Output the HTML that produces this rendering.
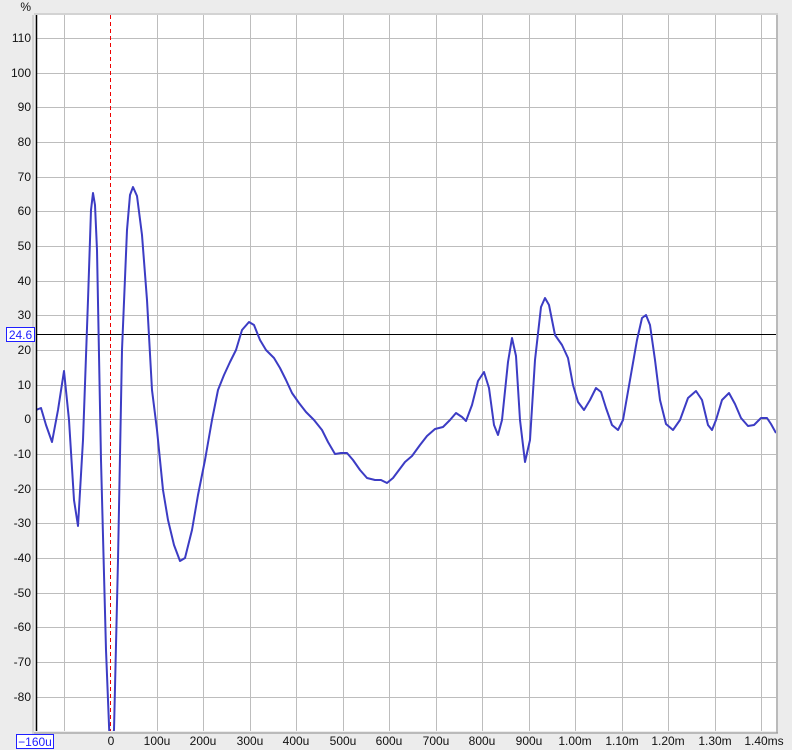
<!DOCTYPE html>
<html><head><meta charset="utf-8"><style>
html,body{margin:0;padding:0;background:#ececec;}
svg{display:block;font-family:"Liberation Sans","DejaVu Sans",sans-serif;}
</style></head><body>
<svg width="792" height="750" viewBox="0 0 792 750" xmlns="http://www.w3.org/2000/svg">
<rect width="792" height="750" fill="#ececec"/>
<rect x="36" y="15" width="740" height="716" fill="#fff"/>
<g stroke="#bdbdbd" stroke-width="1">
<line x1="64.5" y1="15" x2="64.5" y2="731"/>
<line x1="157.5" y1="15" x2="157.5" y2="731"/>
<line x1="203.5" y1="15" x2="203.5" y2="731"/>
<line x1="250.5" y1="15" x2="250.5" y2="731"/>
<line x1="296.5" y1="15" x2="296.5" y2="731"/>
<line x1="343.5" y1="15" x2="343.5" y2="731"/>
<line x1="389.5" y1="15" x2="389.5" y2="731"/>
<line x1="436.5" y1="15" x2="436.5" y2="731"/>
<line x1="482.5" y1="15" x2="482.5" y2="731"/>
<line x1="529.5" y1="15" x2="529.5" y2="731"/>
<line x1="575.5" y1="15" x2="575.5" y2="731"/>
<line x1="622.5" y1="15" x2="622.5" y2="731"/>
<line x1="668.5" y1="15" x2="668.5" y2="731"/>
<line x1="715.5" y1="15" x2="715.5" y2="731"/>
<line x1="761.5" y1="15" x2="761.5" y2="731"/>
<line x1="36" y1="38.5" x2="776" y2="38.5"/>
<line x1="36" y1="73.5" x2="776" y2="73.5"/>
<line x1="36" y1="107.5" x2="776" y2="107.5"/>
<line x1="36" y1="142.5" x2="776" y2="142.5"/>
<line x1="36" y1="177.5" x2="776" y2="177.5"/>
<line x1="36" y1="211.5" x2="776" y2="211.5"/>
<line x1="36" y1="246.5" x2="776" y2="246.5"/>
<line x1="36" y1="281.5" x2="776" y2="281.5"/>
<line x1="36" y1="315.5" x2="776" y2="315.5"/>
<line x1="36" y1="350.5" x2="776" y2="350.5"/>
<line x1="36" y1="385.5" x2="776" y2="385.5"/>
<line x1="36" y1="419.5" x2="776" y2="419.5"/>
<line x1="36" y1="454.5" x2="776" y2="454.5"/>
<line x1="36" y1="489.5" x2="776" y2="489.5"/>
<line x1="36" y1="523.5" x2="776" y2="523.5"/>
<line x1="36" y1="558.5" x2="776" y2="558.5"/>
<line x1="36" y1="593.5" x2="776" y2="593.5"/>
<line x1="36" y1="627.5" x2="776" y2="627.5"/>
<line x1="36" y1="662.5" x2="776" y2="662.5"/>
<line x1="36" y1="697.5" x2="776" y2="697.5"/>
</g>
<line x1="110.5" y1="15" x2="110.5" y2="731" stroke="#e00" stroke-width="1" stroke-dasharray="4,3"/>
<line x1="36" y1="334.5" x2="776" y2="334.5" stroke="#000" stroke-width="1"/>
<svg x="36" y="15" width="740" height="716" viewBox="36 15 740 716" overflow="hidden">
<polyline fill="none" stroke="#3c3cc4" stroke-width="2" stroke-linejoin="round" points="36,410 41,408 46,425 52,442 58,410 64,371 69,420 74,500 78,526 83,440 88,300 91,210 93,193 95,205 97,250 101,460 106,650 110,750 114,730 118,560 122,350 127,230 130,195 133,187 137,196 142,235 147,300 152,390 157,430 163,490 168,520 174,545 180,561 185,558 192,530 198,495 205,460 212,420 218,390 224,375 230,362 236,350 242,330 249,322 254,325 260,340 266,350 274,358 280,368 286,380 292,393 299,403 306,412 314,420 322,430 328,442 335,454 341,453 347,453 353,460 360,470 367,478 375,480 381,480 387,483 393,478 399,470 405,462 412,456 420,445 427,436 435,429 443,427 450,420 456,413 462,417 466,421 472,405 478,381 484,372 489,388 494,425 498,435 502,420 508,362 512,338 516,356 520,420 525,462 530,440 535,360 541,307 545,298 549,305 555,335 562,345 568,358 573,385 578,402 584,410 590,400 596,388 601,392 606,408 612,425 618,430 623,420 630,380 637,340 642,318 646,315 650,325 655,360 660,400 666,424 673,430 680,420 688,398 696,391 702,400 708,425 712,430 716,420 722,400 729,393 735,404 741,418 748,426 754,425 761,418 767,418 771,424 776,433"/>
</svg>
<line x1="36.5" y1="15" x2="36.5" y2="731" stroke="#000" stroke-width="1.5"/>
<line x1="33" y1="15" x2="33" y2="734" stroke="#999" stroke-width="1" opacity="0.6"/>
<line x1="34" y1="733" x2="778" y2="733" stroke="#999" stroke-width="2" opacity="0.6"/>
<line x1="777" y1="15" x2="777" y2="733" stroke="#999" stroke-width="2" opacity="0.6"/>
<line x1="34" y1="14" x2="778" y2="14" stroke="#999" stroke-width="1" opacity="0.6"/>
<g font-size="12" fill="#111" text-anchor="end">
<text x="31" y="11">%</text>
<text x="31" y="42">110</text>
<text x="31" y="77">100</text>
<text x="31" y="111">90</text>
<text x="31" y="146">80</text>
<text x="31" y="181">70</text>
<text x="31" y="215">60</text>
<text x="31" y="250">50</text>
<text x="31" y="285">40</text>
<text x="31" y="319">30</text>
<text x="31" y="354">20</text>
<text x="31" y="389">10</text>
<text x="31" y="423">0</text>
<text x="31" y="458">-10</text>
<text x="31" y="493">-20</text>
<text x="31" y="527">-30</text>
<text x="31" y="562">-40</text>
<text x="31" y="597">-50</text>
<text x="31" y="631">-60</text>
<text x="31" y="666">-70</text>
<text x="31" y="701">-80</text>
</g>
<rect x="6.5" y="327.5" width="28" height="14" fill="#fff" stroke="#2020ff"/>
<text x="20.5" y="339" font-size="12" fill="#2020ff" text-anchor="middle">24.6</text>
<rect x="16.5" y="734.5" width="37" height="14" fill="#fff" stroke="#2020ff"/>
<text x="35" y="746" font-size="12" fill="#2020ff" text-anchor="middle">−160u</text>
<g font-size="12" fill="#111" text-anchor="middle">
<text x="111" y="745">0</text>
<text x="157" y="745">100u</text>
<text x="203" y="745">200u</text>
<text x="250" y="745">300u</text>
<text x="296" y="745">400u</text>
<text x="343" y="745">500u</text>
<text x="389" y="745">600u</text>
<text x="436" y="745">700u</text>
<text x="482" y="745">800u</text>
<text x="529" y="745">900u</text>
<text x="575" y="745">1.00m</text>
<text x="622" y="745">1.10m</text>
<text x="668" y="745">1.20m</text>
<text x="715" y="745">1.30m</text>
<text x="764" y="745">1.40ms</text>
</g>
</svg>
</body></html>
